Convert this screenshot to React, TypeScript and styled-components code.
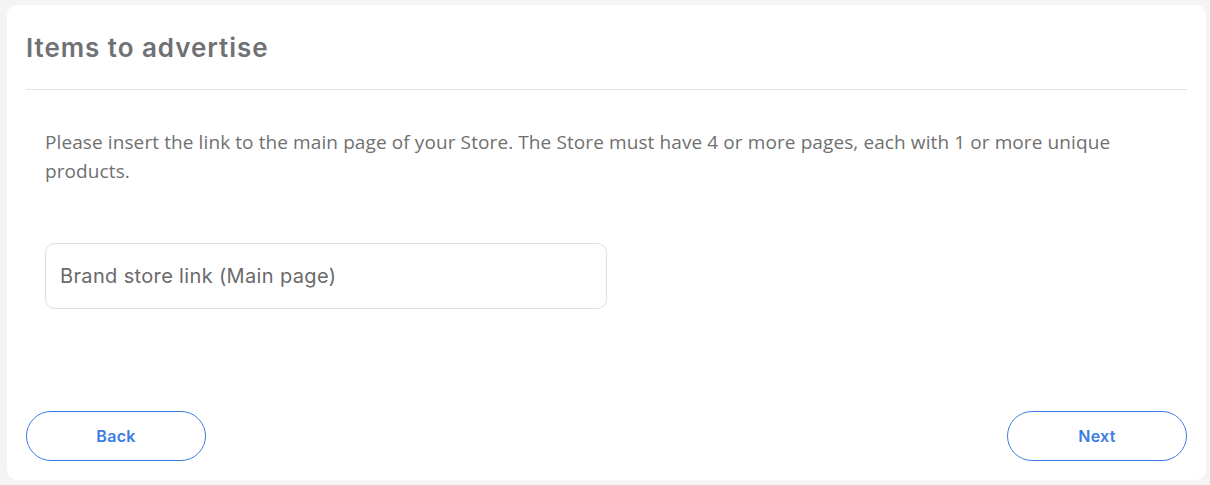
import React from "react";
import styled, { createGlobalStyle } from "styled-components";

const Global = createGlobalStyle`
  html, body { margin: 0; padding: 0; background: #f4f4f4; }
  body { font-family: "Open Sans", "Liberation Sans", sans-serif; }
  * { box-sizing: border-box; }
`;

const Page = styled.div`
  padding: 5px 4px 5px 7px;
`;

const Card = styled.section`
  background: #ffffff;
  border-radius: 10px;
  height: 475px;
  display: flex;
  flex-direction: column;
  padding: 0 19px 19px;
`;

const Header = styled.header`
  height: 85px;
  display: flex;
  align-items: center;
  border-bottom: 1px solid #e2e2e2;
`;

const Title = styled.h1`
  margin: 0;
  font-family: "Inter", "Liberation Sans", sans-serif;
  font-weight: 600;
  font-size: 26px;
  letter-spacing: 0.95px;
  color: #6f7174;
`;

const Body = styled.div`
  flex: 1;
  padding: 38px 19px 0;
  display: flex;
  flex-direction: column;
  gap: 57px;
`;

const Text = styled.p`
  margin: 0;
  font-size: 19px;
  line-height: 29px;
  letter-spacing: 0.1px;
  color: #707070;
`;

const Input = styled.input`
  width: 562px;
  height: 66px;
  border: 1px solid #dedede;
  border-radius: 10px;
  padding: 0 14px;
  font-family: "Inter", "Liberation Sans", sans-serif;
  font-size: 20px;
  letter-spacing: 0.35px;
  color: #666;
  outline: none;
  &::placeholder { color: #6a6a6a; }
`;

const Footer = styled.footer`
  display: flex;
  justify-content: space-between;
  padding-top: 1px;
`;

const Button = styled.button`
  width: 180px;
  height: 50px;
  border: 1px solid #3a7de2;
  border-radius: 26px;
  background: #fff;
  color: #3a7de2;
  font-family: "Inter", "Liberation Sans", sans-serif;
  font-weight: 600;
  font-size: 16px;
  letter-spacing: 0.3px;
  cursor: pointer;
`;

export default function App() {
  return (
    <Page>
      <Global />
      <Card>
        <Header>
          <Title>Items to advertise</Title>
        </Header>
        <Body>
          <Text>
            Please insert the link to the main page of your Store. The Store must have 4 or more pages, each with 1 or more unique products.
          </Text>
          <Input placeholder="Brand store link (Main page)" />
        </Body>
        <Footer>
          <Button>Back</Button>
          <Button>Next</Button>
        </Footer>
      </Card>
    </Page>
  );
}
